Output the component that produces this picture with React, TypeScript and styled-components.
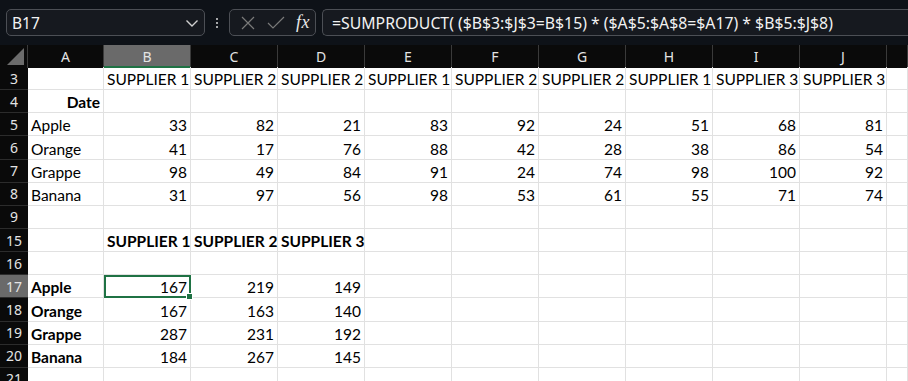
import { memo } from "react";
import styled, { createGlobalStyle, css } from "styled-components";

const GlobalStyle = createGlobalStyle`
	html, body {
		margin: 0;
		padding: 0;
		background: #ffffff;
	}
	body {
		width: 908px;
		height: 381px;
		overflow: hidden;
		font-family: "Noto Sans", "Open Sans", sans-serif;
	}
`

const COLS = "28px 76px repeat(9, 87px) 1fr";
const ROW_H = 23.15;
const GREEN = "#1f7244";

const Page = styled.div`
	display: flex;
	flex-direction: column;
	width: 908px;
	height: 381px;
	overflow: hidden;
`

const TopBar = styled.div`
	display: flex;
	align-items: center;
	flex-shrink: 0;
	height: 45px;
	padding: 0 0 0 6px;
	background: #0e1218;
	box-sizing: border-box;
`

const Box = styled.div`
	display: flex;
	align-items: center;
	height: 27px;
	box-sizing: border-box;
	border: 1px solid #4c4f55;
	border-radius: 5px;
	background: #16191f;
	color: #f2f2f2;
`

const NameBox = styled(Box)`
	width: 199px;
	padding: 0 4px 0 5px;
	justify-content: space-between;
	font-size: 15.5px;
`

const Dots = styled.div`
	display: flex;
	flex-direction: column;
	gap: 2px;
	width: 24px;
	align-items: center;
	& > span {
		width: 2px;
		height: 2px;
		background: #d8d8d8;
		border-radius: 1px;
	}
`

const FxBox = styled(Box)`
	width: 87px;
	padding: 0 5px 0 10px;
	justify-content: space-between;
`

const Fx = styled.span`
	font-family: "Liberation Serif", serif;
	font-style: italic;
	font-size: 18px;
	color: #e8e8e8;
	letter-spacing: 0.5px;
`

const FormulaBox = styled(Box)`
	flex: 1;
	margin-left: 6px;
	padding-left: 9px;
	border-right: none;
	border-radius: 5px 0 0 5px;
	font-size: 15.8px;
	white-space: nowrap;
`

const Grid = styled.div`
	display: flex;
	flex-direction: column;
	flex-shrink: 0;
`

const Row = styled.div<{ $h?: number }>`
	display: grid;
	grid-template-columns: ${COLS};
	height: ${(p) => p.$h ?? ROW_H}px;
`

const ColHead = styled.div<{ $sel?: boolean }>`
	display: flex;
	align-items: center;
	justify-content: center;
	background: ${(p) => (p.$sel ? "#6a6a6a" : "#0a0a0a")};
	border-right: 1px solid #3a3a3a;
	box-sizing: border-box;
	color: #e4e4e4;
	font-size: 14px;
	${(p) =>
		p.$sel &&
		css`
			border-bottom: 2px solid ${GREEN};
			padding-top: 2px;
		`}
`

const Corner = styled.div`
	position: relative;
	background: #0a0a0a;
	border-right: 1px solid #3a3a3a;
	&::after {
		content: "";
		position: absolute;
		right: 3px;
		bottom: 3px;
		width: 0;
		height: 0;
		border-left: 17px solid transparent;
		border-bottom: 17px solid #6c6c6c;
	}
`

const RowHead = styled.div<{ $sel?: boolean }>`
	display: flex;
	align-items: center;
	justify-content: center;
	background: ${(p) => (p.$sel ? "#6a6a6a" : "#0a0a0a")};
	border-bottom: 1px solid #2c2c2c;
	box-sizing: border-box;
	color: #e4e4e4;
	font-size: 14px;
`

const Cell = styled.div<{ $right?: boolean; $bold?: boolean; $sel?: boolean }>`
	position: relative;
	display: flex;
	align-items: flex-end;
	justify-content: ${(p) => (p.$right ? "flex-end" : "flex-start")};
	padding: 0 3px 1px 3px;
	box-sizing: border-box;
	border-right: 1px solid #e1e1e1;
	border-bottom: 1px solid #e1e1e1;
	font-family: "Lato", "Open Sans", sans-serif;
	font-size: 15.5px;
	font-weight: ${(p) => (p.$bold ? 700 : 400)};
	color: #000000;
	white-space: nowrap;
	overflow: visible;
	${(p) =>
		p.$sel &&
		css`
			outline: 2px solid ${GREEN};
			outline-offset: -2px;
			&::after {
				content: "";
				position: absolute;
				right: -3px;
				bottom: -3px;
				width: 5px;
				height: 5px;
				background: ${GREEN};
				border: 1px solid #ffffff;
				z-index: 2;
			}
		`}
`

const Chevron = () => (
	<svg width="16" height="16" viewBox="0 0 16 16">
		<path d="M2.5 5.5 L8 11 L13.5 5.5" fill="none" stroke="#d0d0d0" strokeWidth="1.4" />
	</svg>
);

const XIcon = () => (
	<svg width="16" height="16" viewBox="0 0 16 16">
		<path d="M2 2 L14 14 M14 2 L2 14" fill="none" stroke="#7a7a7a" strokeWidth="1.2" />
	</svg>
);

const CheckIcon = () => (
	<svg width="18" height="16" viewBox="0 0 18 16">
		<path d="M1 8 L6 13 L17 2" fill="none" stroke="#7a7a7a" strokeWidth="1.2" />
	</svg>
);

type CellData = { v?: string | number; bold?: boolean };

const letters = ["A", "B", "C", "D", "E", "F", "G", "H", "I", "J", ""];

const rows: { n: number; cells: CellData[] }[] = [
	{ n: 3, cells: [{}, ...["SUPPLIER 1", "SUPPLIER 2", "SUPPLIER 2", "SUPPLIER 1", "SUPPLIER 2", "SUPPLIER 2", "SUPPLIER 1", "SUPPLIER 3", "SUPPLIER 3"].map((v) => ({ v }))] },
	{ n: 4, cells: [{ v: "Date", bold: true }] },
	{ n: 5, cells: [{ v: "Apple" }, ...[33, 82, 21, 83, 92, 24, 51, 68, 81].map((v) => ({ v }))] },
	{ n: 6, cells: [{ v: "Orange" }, ...[41, 17, 76, 88, 42, 28, 38, 86, 54].map((v) => ({ v }))] },
	{ n: 7, cells: [{ v: "Grappe" }, ...[98, 49, 84, 91, 24, 74, 98, 100, 92].map((v) => ({ v }))] },
	{ n: 8, cells: [{ v: "Banana" }, ...[31, 97, 56, 98, 53, 61, 55, 71, 74].map((v) => ({ v }))] },
	{ n: 9, cells: [] },
	{ n: 15, cells: [{}, ...["SUPPLIER 1", "SUPPLIER 2", "SUPPLIER 3"].map((v) => ({ v, bold: true }))] },
	{ n: 16, cells: [] },
	{ n: 17, cells: [{ v: "Apple", bold: true }, ...[167, 219, 149].map((v) => ({ v }))] },
	{ n: 18, cells: [{ v: "Orange", bold: true }, ...[167, 163, 140].map((v) => ({ v }))] },
	{ n: 19, cells: [{ v: "Grappe", bold: true }, ...[287, 231, 192].map((v) => ({ v }))] },
	{ n: 20, cells: [{ v: "Banana", bold: true }, ...[184, 267, 145].map((v) => ({ v }))] },
	{ n: 21, cells: [] },
];

const Sheet = memo(() => (
	<Grid>
		<Row $h={22}>
			<Corner />
			{letters.map((l, i) => (
				<ColHead key={i} $sel={l === "B"}>{l}</ColHead>
			))}
		</Row>
		{rows.map((r) => (
			<Row key={r.n}>
				<RowHead $sel={r.n === 17}>{r.n}</RowHead>
				{letters.map((_, i) => {
					const c = r.cells[i] ?? {};
					const isNum = typeof c.v === "number";
					// "Date" sits right-aligned in A4
					const right = isNum || (r.n === 4 && i === 0);
					return (
						<Cell key={i} $right={right} $bold={c.bold} $sel={r.n === 17 && i === 1}>
							{c.v}
						</Cell>
					);
				})}
			</Row>
		))}
	</Grid>
));

export default function App() {
	return (
		<>
			<GlobalStyle />
			<Page>
				<TopBar>
					<NameBox>
						<span>B17</span>
						<Chevron />
					</NameBox>
					<Dots>
						<span />
						<span />
						<span />
					</Dots>
					<FxBox>
						<XIcon />
						<CheckIcon />
						<Fx>fx</Fx>
					</FxBox>
					<FormulaBox>=SUMPRODUCT( ($B$3:$J$3=B$15) * ($A$5:$A$8=$A17) * $B$5:$J$8)</FormulaBox>
				</TopBar>
				<Sheet />
			</Page>
		</>
	);
}
